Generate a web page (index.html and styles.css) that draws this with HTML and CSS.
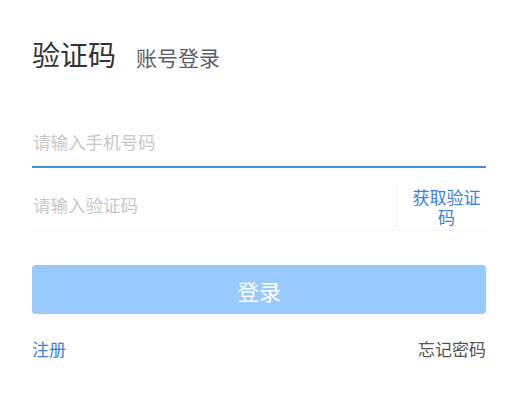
FILE: index.html
```html
<!DOCTYPE html>
<html lang="zh">
<head>
<meta charset="utf-8">
<link rel="stylesheet" href="styles.css">
</head>
<body>
<div class="page">
  <div class="tabs">
    <span class="tab active">验证码</span>
    <span class="tab">账号登录</span>
  </div>
  <div class="field phone">
    <span class="placeholder">请输入手机号码</span>
  </div>
  <div class="field code">
    <span class="placeholder">请输入验证码</span>
    <span class="get-code">获取验证码</span>
  </div>
  <div class="btn">登录</div>
  <div class="footer">
    <span class="link">注册</span>
    <span class="muted">忘记密码</span>
  </div>
</div>
</body>
</html>
```
FILE: styles.css
```css
* { box-sizing: border-box; }
html, body { margin: 0; padding: 0; background: #fff; }
body { font-family: "Noto Sans CJK SC", "Noto Sans", sans-serif; }
.page { width: 514px; padding: 36px 28px 0 32px; }
.tabs { display: flex; align-items: baseline; gap: 20px; height: 36px; line-height: 36px; }
.tab { font-size: 21px; color: #5b5f68; }
.tab.active { font-size: 28px; color: #333; }
.field { display: flex; align-items: center; }
.phone { margin-top: 45px; height: 51px; border-bottom: 2px solid #3d8fe6; }
.placeholder { font-size: 17.5px; color: #c8c8c8; flex: 1; padding-left: 1px; }
.code { padding-top: 13px; height: 63px; border-bottom: 1px solid #f2f2f2; }
.code .placeholder { padding-bottom: 2px; }
.get-code { width: 90px; font-size: 17px; line-height: 20px; color: #3b7fe0; text-align: center; border-left: 1px solid #f3f3f3; padding-left: 12px; padding-right: 2px; padding-top: 3px; padding-bottom: 1px; }
.btn { margin-top: 34px; height: 49px; background: #99caff; border-radius: 4px; color: #fff; font-size: 22px; display: flex; align-items: center; justify-content: center; }
.footer { margin-top: 24px; display: flex; justify-content: space-between; font-size: 17px; line-height: 22px; }
.link { color: #3b7fe0; }
.muted { color: #555; }
```
